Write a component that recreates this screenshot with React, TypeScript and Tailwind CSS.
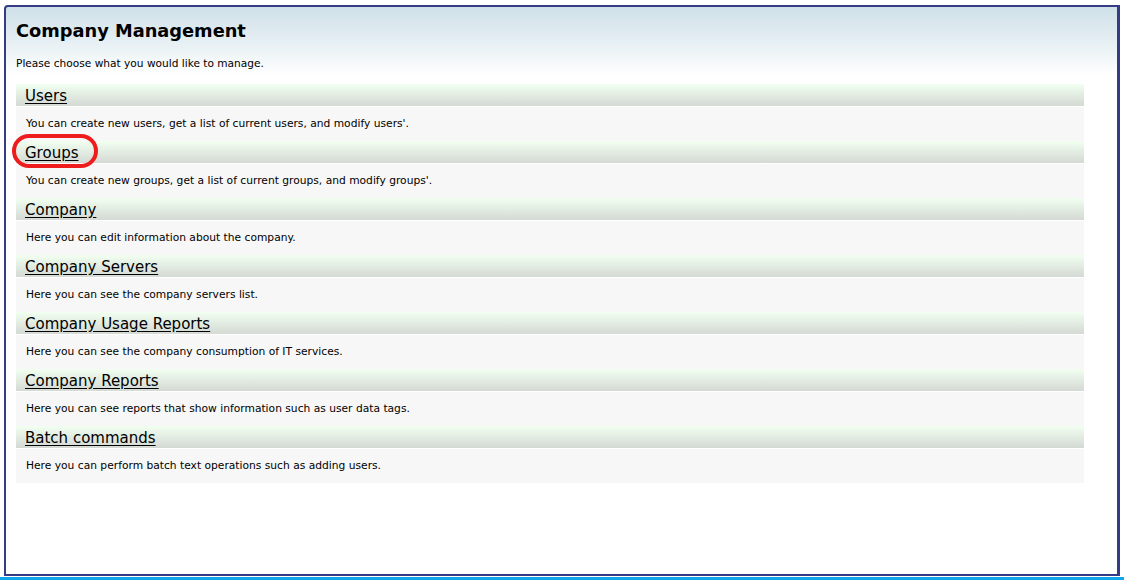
const items = [
  {
    title: "Users",
    text: "You can create new users, get a list of current users, and modify users'.",
  },
  {
    title: "Groups",
    text: "You can create new groups, get a list of current groups, and modify groups'.",
  },
  { title: "Company", text: "Here you can edit information about the company." },
  { title: "Company Servers", text: "Here you can see the company servers list." },
  {
    title: "Company Usage Reports",
    text: "Here you can see the company consumption of IT services.",
  },
  {
    title: "Company Reports",
    text: "Here you can see reports that show information such as user data tags.",
  },
  {
    title: "Batch commands",
    text: "Here you can perform batch text operations such as adding users.",
  },
];

export default function App() {
  return (
    <div className="relative flex h-[580px] w-[1124px] flex-col bg-white font-['DejaVu_Sans',Verdana,sans-serif] text-black">
      <div className="mx-[4px] mt-[5px] h-[572px] rounded-tl-[4px] border-2 border-r-[3px] border-[#353b84] bg-[linear-gradient(to_bottom,#cfe0e8_0px,#e6eff3_35px,#ffffff_68px)] pl-[10px] pr-[33px]">
        <h1 className="mt-[13px] text-[17.8px] font-bold leading-[22px]">Company Management</h1>
        <p className="mt-[14px] text-[10.6px] leading-[14px]">
          Please choose what you would like to manage.
        </p>
        <div className="mt-[14px] flex flex-col">
          {items.map((item) => (
            <div key={item.title} className="flex flex-col">
              <div className="h-[22px] bg-[linear-gradient(to_bottom,#f1fff0,#d4d9d4)] pl-[9px]">
                <a href="#" className="text-[15px] leading-[22px] underline underline-offset-[2px]">
                  {item.title}
                </a>
              </div>
              <div className="mt-[1px] h-[34px] bg-[#f7f7f7] pl-[10px] text-[10.7px] leading-[34px]">
                {item.text}
              </div>
            </div>
          ))}
        </div>
      </div>
      <div className="mt-[1px] h-[3px] w-full bg-[#10a4ea]" />
      <div className="pointer-events-none absolute left-[12px] top-[134px] h-[34px] w-[86px] rounded-[17px] border-[4px] border-[#ee1c1c]" />
    </div>
  );
}
